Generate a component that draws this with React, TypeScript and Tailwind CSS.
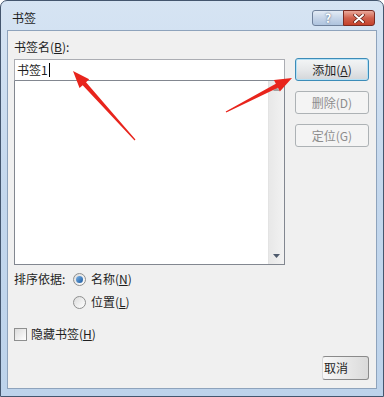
import React from "react";

const font = { fontFamily: '"Noto Sans CJK SC", "Liberation Sans", sans-serif' };

// tapered annotation arrow (tail thin, head wide)
function arrowPoints(tail: [number, number], tip: [number, number]) {
  const dx = tip[0] - tail[0];
  const dy = tip[1] - tail[1];
  const len = Math.hypot(dx, dy);
  const ux = dx / len;
  const uy = dy / len;
  const nx = -uy;
  const ny = ux;
  const headLen = 17;
  const headW = 13;
  const shaftW = 4.5;
  const tailW = 1.2;
  const bx = tip[0] - ux * headLen;
  const by = tip[1] - uy * headLen;
  const pts = [
    [tail[0] + (nx * tailW) / 2, tail[1] + (ny * tailW) / 2],
    [bx + (nx * shaftW) / 2, by + (ny * shaftW) / 2],
    [bx + (nx * headW) / 2, by + (ny * headW) / 2],
    [tip[0], tip[1]],
    [bx - (nx * headW) / 2, by - (ny * headW) / 2],
    [bx - (nx * shaftW) / 2, by - (ny * shaftW) / 2],
    [tail[0] - (nx * tailW) / 2, tail[1] - (ny * tailW) / 2],
  ];
  return pts.map((p) => p.join(",")).join(" ");
}

function Radio({ checked }: { checked?: boolean }) {
  return (
    <span className="w-[13px] h-[13px] rounded-full border border-[#8e8f8f] bg-gradient-to-br from-[#dcdcdc] to-[#ffffff] flex items-center justify-center shrink-0">
      {checked && <span className="w-[7px] h-[7px] rounded-full bg-gradient-to-br from-[#7ab3e6] to-[#1a5aa0]" />}
    </span>
  );
}

function WinButton({
  children,
  disabled,
  primary,
}: {
  children: React.ReactNode;
  disabled?: boolean;
  primary?: boolean;
}) {
  if (primary) {
    return (
      <div className="w-[74px] h-[23px] rounded-[3px] border border-[#3c8cb8] shadow-[inset_0_0_0_1px_#b4e0f5] bg-gradient-to-b from-[#f3f5f6] via-[#e6e8ea] to-[#d3d6d9] flex items-center justify-center text-[12px] text-[#1e1e1e]">
        {children}
      </div>
    );
  }
  return (
    <div
      className={
        disabled
          ? "w-[74px] h-[23px] rounded-[3px] border border-[#adb2b5] bg-[#f4f4f4] flex items-center justify-center text-[12px] text-[#8d8d8d]"
          : "w-[74px] h-[23px] rounded-[3px] border border-[#707070] bg-gradient-to-b from-[#f2f2f2] to-[#d5d5d5] flex items-center justify-center text-[12px] text-[#1e1e1e]"
      }
    >
      {children}
    </div>
  );
}

export default function App() {
  return (
    <div className="relative w-[384px] h-[397px] overflow-hidden bg-white" style={font}>
      <div className="w-[384px] h-[397px] border border-[#44566e] rounded-t-[7px] bg-gradient-to-b from-[#d6e4f3] via-[#c3d7ed] to-[#bdd3eb] flex flex-col">
        {/* title bar */}
        <div className="h-[29px] flex items-start shrink-0">
          <div className="pl-[11px] pt-[9px] text-[12px] leading-[16px] text-[#1e1e1e]">书签</div>
          <div className="ml-auto mt-[9px] mr-[8px] flex">
            <div className="w-[32px] h-[16px] rounded-l-[3px] border border-[#6f819b] bg-gradient-to-b from-[#e3ebf5] via-[#c6d5e8] to-[#aec3de] flex items-center justify-center text-[12px] font-bold leading-none text-white [text-shadow:0_0_2px_#3a4f6b]">
              ?
            </div>
            <div className="w-[32px] h-[16px] -ml-px rounded-r-[3px] border border-[#7a2b22] bg-gradient-to-b from-[#e9a99b] via-[#d0614d] to-[#c4412b] flex items-center justify-center">
              <svg width="12" height="9" viewBox="0 0 12 9">
                <path d="M2 1 L10 8 M10 1 L2 8" stroke="#5a1d14" strokeWidth="3.4" strokeLinecap="round" />
                <path d="M2 1 L10 8 M10 1 L2 8" stroke="#ffffff" strokeWidth="2" strokeLinecap="round" />
              </svg>
            </div>
          </div>
        </div>

        {/* client area */}
        <div className="mx-[6px] h-[359px] border border-[#8ea3bc] bg-[#f0f0f0] flex flex-col pl-[6px] text-[12px] leading-[16px] text-[#1e1e1e]">
          <div className="flex items-start gap-[10px]">
            <div className="w-[271px] pt-[8px]">
              <div className="mb-[4px]">
                书签名(<span className="underline">B</span>):
              </div>
              <div className="h-[22px] border border-[#abadb3] border-b-[#828790] bg-white pl-[2px] flex items-center">
                <span>书签1</span>
                <span className="w-px h-[14px] bg-black ml-[1px]" />
              </div>
              <div className="h-[184px] border border-t-0 border-[#828790] bg-white flex justify-end">
                <div className="w-[16px] h-full bg-gradient-to-r from-[#e8e8e8] to-[#f2f2f2] border-l border-[#e3e3e3] flex flex-col items-center justify-between py-[6px]">
                  <svg width="7" height="4" viewBox="0 0 7 4">
                    <path d="M0 4 L3.5 0 L7 4 Z" fill="#a3a3a3" />
                  </svg>
                  <svg width="7" height="4" viewBox="0 0 7 4">
                    <path d="M0 0 L7 0 L3.5 4 Z" fill="#4e5a6c" />
                  </svg>
                </div>
              </div>
            </div>
            <div className="mt-[27px] flex flex-col gap-[10px]">
              <WinButton primary>
                添加(<span className="underline">A</span>)
              </WinButton>
              <WinButton disabled>删除(D)</WinButton>
              <WinButton disabled>定位(G)</WinButton>
            </div>
          </div>

          {/* sort by */}
          <div className="mt-[6px] flex items-center h-[16px]">
            <span className="w-[59px]">排序依据:</span>
            <Radio checked />
            <span className="ml-[5px]">
              名称(<span className="underline">N</span>)
            </span>
          </div>
          <div className="mt-[7px] flex items-center h-[16px] pl-[59px]">
            <Radio />
            <span className="ml-[5px]">
              位置(<span className="underline">L</span>)
            </span>
          </div>

          {/* hide bookmarks */}
          <div className="mt-[16px] flex items-center h-[16px]">
            <span className="w-[13px] h-[13px] border border-[#8e8f8f] bg-gradient-to-br from-[#dcdcdc] to-[#ffffff] shrink-0" />
            <span className="ml-[4px]">
              隐藏书签(<span className="underline">H</span>)
            </span>
          </div>

          <div className="mt-[14px] flex justify-end pr-[7px]">
            <div className="w-[47px] h-[24px] rounded-[3px] border border-[#8a8a8a] border-l-[#d8d8d8] bg-gradient-to-r from-[#f8f8f8] to-[#dadada] flex items-center pl-[1px] text-[12px] text-[#1e1e1e]">
              取消
            </div>
          </div>
        </div>
      </div>

      {/* annotation arrows */}
      <svg className="absolute inset-0 pointer-events-none" width="384" height="397" viewBox="0 0 384 397">
        <polygon points={arrowPoints([135, 140], [73, 71])} fill="#e8241c" />
        <polygon points={arrowPoints([226, 112], [292, 78])} fill="#e8241c" />
      </svg>
    </div>
  );
}
